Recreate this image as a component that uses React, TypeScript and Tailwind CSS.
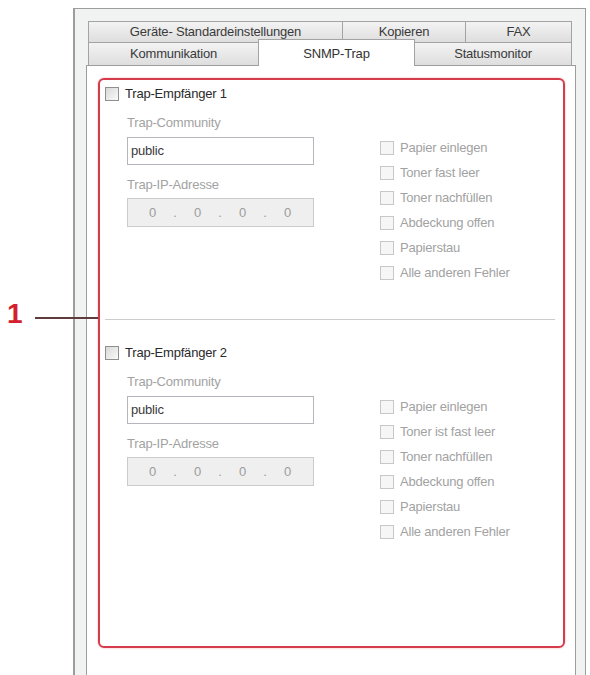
import React from 'react';

type Tab = { label: string; width: string; active?: boolean };

const topRow: Tab[] = [
  { label: 'Geräte- Standardeinstellungen', width: 'w-[254px]' },
  { label: 'Kopieren', width: 'w-[123px]' },
  { label: 'FAX', width: 'w-[107px]' },
];

const bottomRow: Tab[] = [
  { label: 'Kommunikation', width: 'w-[170px]' },
  { label: 'SNMP-Trap', width: 'w-[157px]', active: true },
  { label: 'Statusmonitor', width: 'w-[157px]' },
];

const Checkbox: React.FC<{ enabled?: boolean }> = ({ enabled }) => (
  <span
    className={`block h-[14px] w-[14px] shrink-0 border ${
      enabled
        ? 'border-[#8f8f8f] bg-linear-to-br from-[#d8d8d8] to-[#fafafa]'
        : 'border-[#c8c8c8] bg-[#f6f6f6]'
    }`}
  />
);

interface ReceiverProps {
  index: number;
  events: string[];
}

const Receiver: React.FC<ReceiverProps> = ({ index, events }) => (
  <div>
    <div className="flex h-[16px] items-center gap-[6px] text-[#2a2a2a]">
      <Checkbox enabled />
      <span>Trap-Empfänger {index}</span>
    </div>
    <div className="flex items-start">
      {/* Community + address fields */}
      <div className="ml-[22px] w-[187px] pt-[13px]">
        <div className="h-[16px] leading-[16px] text-[#a2a2a2]">Trap-Community</div>
        <div className="mt-[6px] flex h-[28px] items-center border border-[#b4b6bb] bg-white px-[3px] text-[#3a3a3a]">
          public
        </div>
        <div className="mt-[12px] h-[16px] leading-[16px] text-[#a2a2a2]">Trap-IP-Adresse</div>
        <div className="mt-[5px] flex h-[29px] items-center border border-[#cbcbcb] bg-[#efefef] pl-[5px] text-[#9c9c9c]">
          {[0, 1, 2, 3].map((i) => (
            <React.Fragment key={i}>
              {i > 0 && <span className="w-[6px] text-center">.</span>}
              <span className="w-[39px] text-center">0</span>
            </React.Fragment>
          ))}
        </div>
      </div>
      {/* Event filters */}
      <div className="ml-[66px] pt-[33px]">
        {events.map((e) => (
          <div key={e} className="flex h-[25px] items-center gap-[6px] text-[#a2a2a2]">
            <Checkbox />
            <span>{e}</span>
          </div>
        ))}
      </div>
    </div>
  </div>
);

export default function App() {
  return (
    <div className="relative h-[675px] w-[590px] overflow-hidden bg-white font-['Liberation_Sans',Arial,sans-serif] text-[13px] tracking-[-0.2px]">
      {/* Dialog frame */}
      <div className="ml-[73px] mt-[8px] h-[667px] w-[513px] border-l-2 border-r border-t border-[#9d9d9d] bg-[#f1f2f2] pl-[11px] pt-[12px]">
        <div className="w-[490px]">
          <div className="flex h-[21px] pl-[2px]">
            {topRow.map((t, i) => (
              <div
                key={t.label}
                className={`${t.width} flex items-center justify-center border-l border-t border-[#a3a3a3] bg-linear-to-b from-[#f3f3f3] to-[#dedede] text-[#3a3a3a] ${
                  i === topRow.length - 1 ? 'border-r' : ''
                }`}
              >
                {t.label}
              </div>
            ))}
          </div>
          <div className="flex h-[23px] items-end pl-[2px]">
            {bottomRow.map((t) =>
              t.active ? (
                <div
                  key={t.label}
                  className={`${t.width} relative z-10 -mb-px flex h-[27px] items-start justify-center border-l border-r border-t border-[#a3a3a3] bg-white pt-[4px] text-[#333]`}
                >
                  {t.label}
                </div>
              ) : (
                <div
                  key={t.label}
                  className={`${t.width} flex h-[23px] items-center justify-center border-t border-[#a3a3a3] bg-linear-to-b from-[#f3f3f3] to-[#dedede] text-[#3a3a3a] ${
                    t.label === 'Kommunikation' ? 'border-l' : 'border-r'
                  }`}
                >
                  {t.label}
                </div>
              )
            )}
          </div>
          {/* Tab page */}
          <div className="h-[611px] border border-[#9d9d9d] bg-white px-[11px] pt-[12px]">
            <div className="h-[570px] w-[467px] rounded-[6px] border-2 border-[#d43b4b] pl-[5px] pt-[6px] shadow-[0_0_2px_#f3a0a8]">
              <Receiver
                index={1}
                events={[
                  'Papier einlegen',
                  'Toner fast leer',
                  'Toner nachfüllen',
                  'Abdeckung offen',
                  'Papierstau',
                  'Alle anderen Fehler',
                ]}
              />
              <div className="mt-[34px] h-[2px] w-[450px] border-b border-t border-b-white border-t-[#cdcdcd]" />
              <div className="mt-[24px]">
                <Receiver
                  index={2}
                  events={[
                    'Papier einlegen',
                    'Toner ist fast leer',
                    'Toner nachfüllen',
                    'Abdeckung offen',
                    'Papierstau',
                    'Alle anderen Fehler',
                  ]}
                />
              </div>
            </div>
          </div>
        </div>
      </div>

      {/* Callout marker */}
      <div className="absolute left-[7px] top-[300px] font-['Liberation_Sans',Arial,sans-serif] text-[28px] font-bold leading-none text-[#d4202c]">1</div>
      <div className="absolute left-[35px] top-[317px] h-[2px] w-[63px] bg-[#5e3c3c]" />
    </div>
  );
}
